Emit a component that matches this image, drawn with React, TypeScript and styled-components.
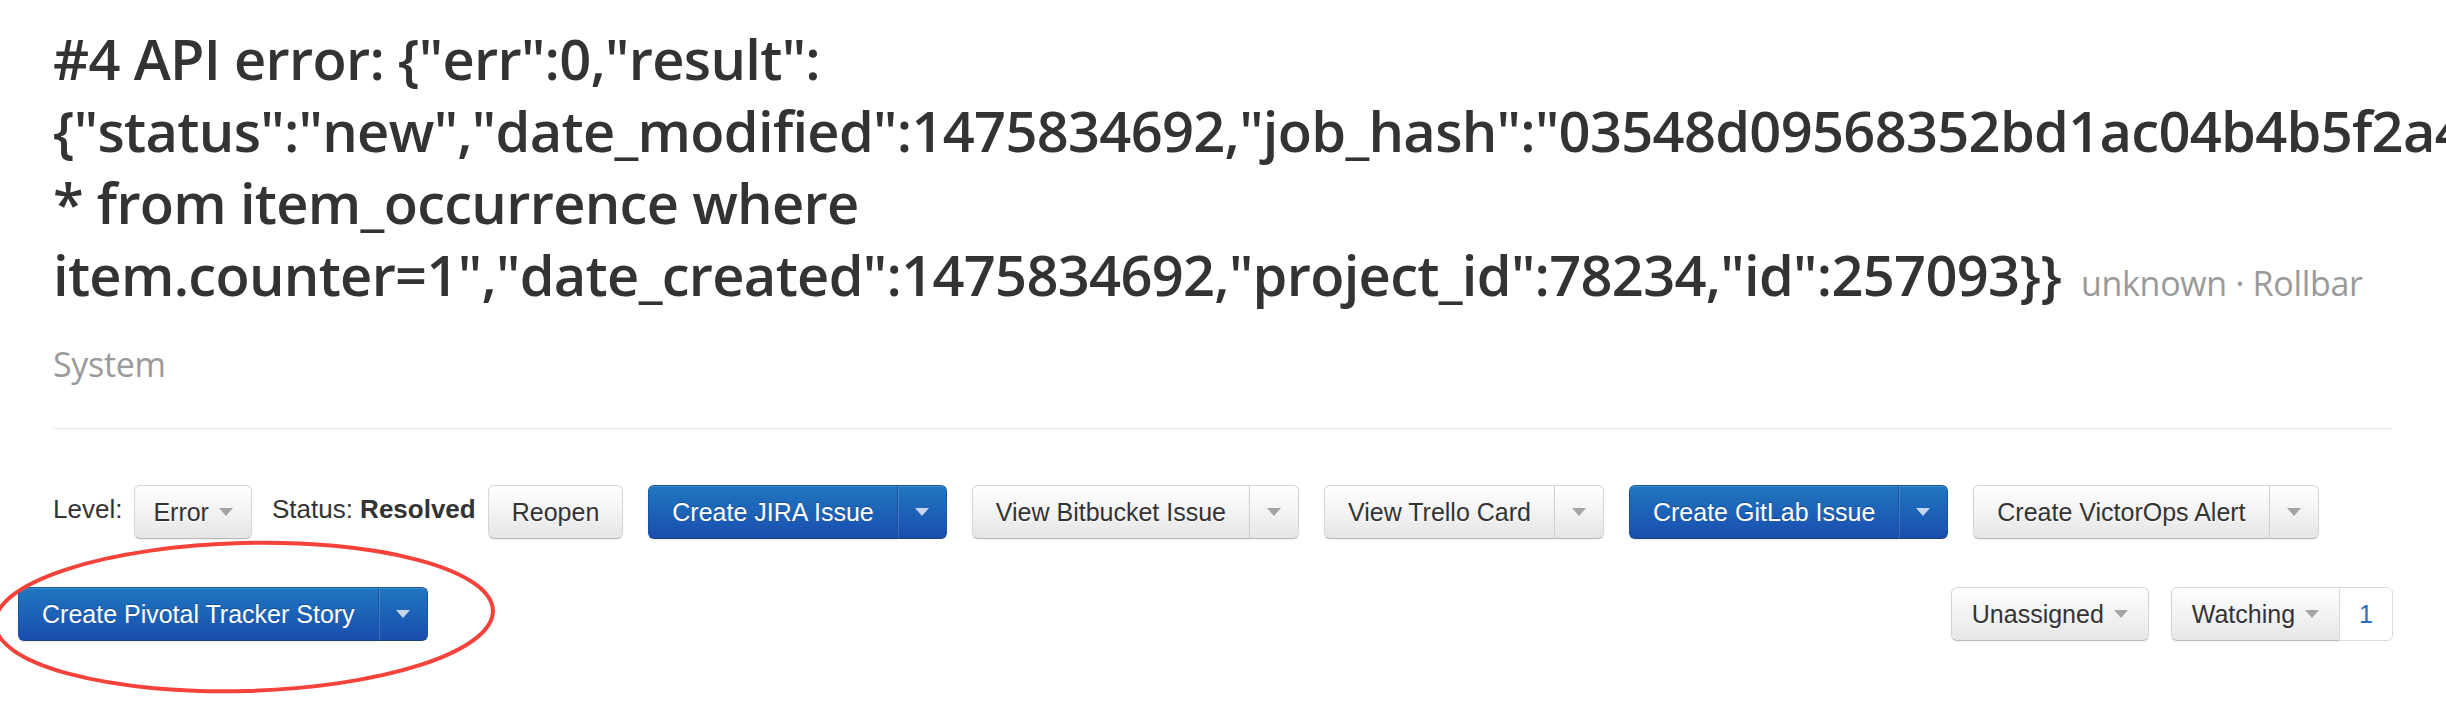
import React from "react";
import styled, { createGlobalStyle, css } from "styled-components";

const GlobalStyle = createGlobalStyle`
  html, body {
    margin: 0;
    padding: 0;
    background: #ffffff;
    overflow: hidden;
  }
`;

const Page = styled.div`
  position: relative;
  box-sizing: border-box;
  min-height: 706px;
  padding: 22px 53px 0 53px;
  overflow: hidden;
  font-family: "Liberation Sans", Arial, sans-serif;
  color: #333;
`;

const Title = styled.h1`
  margin: 0;
  font-family: "Open Sans", sans-serif;
  font-stretch: 90%;
  font-weight: 600;
  font-size: 56px;
  letter-spacing: -0.7px;
  line-height: 72px;
  color: #333;
`;

const Meta = styled.span`
  margin-left: 6px;
  font-size: 34px;
  font-stretch: 95%;
  letter-spacing: -0.3px;
  font-weight: 400;
  color: #9a9a9a;
`;

const Divider = styled.hr`
  margin: 28px 0 0 0;
  border: 0;
  border-top: 1px solid #e8e8e8;
`;

const Toolbar = styled.div`
  display: flex;
  flex-direction: column;
  gap: 48px;
  margin-top: 56px;
`;

const Row = styled.div<{ $wide?: boolean }>`
  display: flex;
  align-items: flex-start;
  ${(p) =>
    p.$wide &&
    css`
      margin-left: -35px;
      justify-content: space-between;
    `}
`;

const Label = styled.span<{ $gap?: number }>`
  padding-top: 9px;
  margin-right: ${(p) => p.$gap ?? 12}px;
  font-size: 26px;
  line-height: 30px;
  color: #333;
  white-space: nowrap;

  b {
    font-weight: 700;
  }
`;

const Group = styled.div<{ $gap?: number }>`
  display: flex;
  margin-right: ${(p) => p.$gap ?? 25}px;
`;

const RightGroup = styled.div`
  display: flex;
  gap: 22px;
`;

const Button = styled.button<{ $primary?: boolean; $part?: "main" | "caret" | "solo" }>`
  display: flex;
  align-items: center;
  gap: 10px;
  box-sizing: border-box;
  height: 54px;
  margin: 0;
  padding: 0 23px;
  font-family: "Liberation Sans", Arial, sans-serif;
  font-size: 25px;
  line-height: 30px;
  white-space: nowrap;
  cursor: pointer;
  border-radius: ${(p) =>
    p.$part === "main" ? "6px 0 0 6px" : p.$part === "caret" ? "0 6px 6px 0" : "6px"};
  ${(p) =>
    p.$part === "caret" &&
    css`
      margin-left: -1px;
      padding: 0 17px;
    `}
  ${(p) =>
    p.$primary
      ? css`
          color: #fff;
          text-shadow: 0 -1px 0 rgba(0, 0, 0, 0.25);
          background: linear-gradient(#1f77bf, #1a4daf);
          border: 1px solid #1a55a3;
          border-bottom-color: #163f86;
          box-shadow: inset 0 1px 0 rgba(255, 255, 255, 0.15), 0 1px 2px rgba(0, 0, 0, 0.08);
        `
      : css`
          color: #333;
          text-shadow: 0 1px 1px rgba(255, 255, 255, 0.75);
          background: linear-gradient(#ffffff, #e6e6e6);
          border: 1px solid #d6d6d6;
          border-bottom-color: #b8b8b8;
          box-shadow: inset 0 1px 0 rgba(255, 255, 255, 0.2), 0 1px 2px rgba(0, 0, 0, 0.06);
        `}
  ${(p) =>
    p.$part === "caret" &&
    p.$primary &&
    css`
      border-left-color: #1b56a4;
      box-shadow: inset 1px 0 0 rgba(255, 255, 255, 0.15), inset 0 1px 0 rgba(255, 255, 255, 0.15);
    `}
  ${(p) =>
    p.$part === "caret" &&
    !p.$primary &&
    css`
      border-left-color: #d0d0d0;
    `}
`;

const Caret = styled.span<{ $light?: boolean }>`
  display: inline-block;
  width: 0;
  height: 0;
  border-left: 7px solid transparent;
  border-right: 7px solid transparent;
  border-top: 8px solid ${(p) => (p.$light ? "#c9d5ee" : "#a5a5a5")};
`;

const Count = styled.span`
  box-sizing: border-box;
  height: 54px;
  padding: 0 19px;
  margin-left: -1px;
  display: flex;
  align-items: center;
  font-size: 25px;
  color: #2a6db8;
  background: #fff;
  border: 1px solid #dcdcdc;
  border-radius: 0 6px 6px 0;
`;

const Annotation = styled.svg`
  position: absolute;
  left: 0;
  top: 538px;
  width: 500px;
  height: 160px;
  overflow: visible;
  pointer-events: none;
`;

type SplitProps = { label: string; primary?: boolean };

const SplitButton: React.FC<SplitProps> = ({ label, primary }) => (
  <Group>
    <Button $primary={primary} $part="main">
      {label}
    </Button>
    <Button $primary={primary} $part="caret" aria-label="More">
      <Caret $light={primary} />
    </Button>
  </Group>
);

const title =
  '#4 API error: {"err":0,"result":{"status":"new","date_modified":1475834692,"job_hash":"03548d09568352bd1ac04b4b5f2a4a01","raw_query":"select * from item_occurrence where item.counter=1","date_created":1475834692,"project_id":78234,"id":257093}}';

export default function App() {
  return (
    <>
      <GlobalStyle />
      <Page>
        <Title>
          {title} <Meta>unknown · Rollbar System</Meta>
        </Title>
        <Divider />
        <Toolbar>
          <Row>
            <Label>Level:</Label>
            <Group $gap={20}>
              <Button $part="solo" style={{ padding: "0 18px" }}>
                Error <Caret />
              </Button>
            </Group>
            <Label>
              Status: <b>Resolved</b>
            </Label>
            <Group>
              <Button $part="solo">Reopen</Button>
            </Group>
            <SplitButton label="Create JIRA Issue" primary />
            <SplitButton label="View Bitbucket Issue" />
            <SplitButton label="View Trello Card" />
            <SplitButton label="Create GitLab Issue" primary />
            <SplitButton label="Create VictorOps Alert" />
          </Row>
          <Row $wide>
            <SplitButton label="Create Pivotal Tracker Story" primary />
            <RightGroup>
              <Button $part="solo" style={{ padding: "0 20px" }}>
                Unassigned <Caret />
              </Button>
              <Group $gap={0}>
                <Button $part="main" style={{ padding: "0 20px" }}>
                  Watching <Caret />
                </Button>
                <Count>1</Count>
              </Group>
            </RightGroup>
          </Row>
        </Toolbar>
        <Annotation viewBox="0 0 500 160">
          <ellipse cx="244" cy="79" rx="249" ry="74" fill="none" stroke="#f5433b" strokeWidth="4" transform="rotate(-1.5 244 79)" />
        </Annotation>
      </Page>
    </>
  );
}
